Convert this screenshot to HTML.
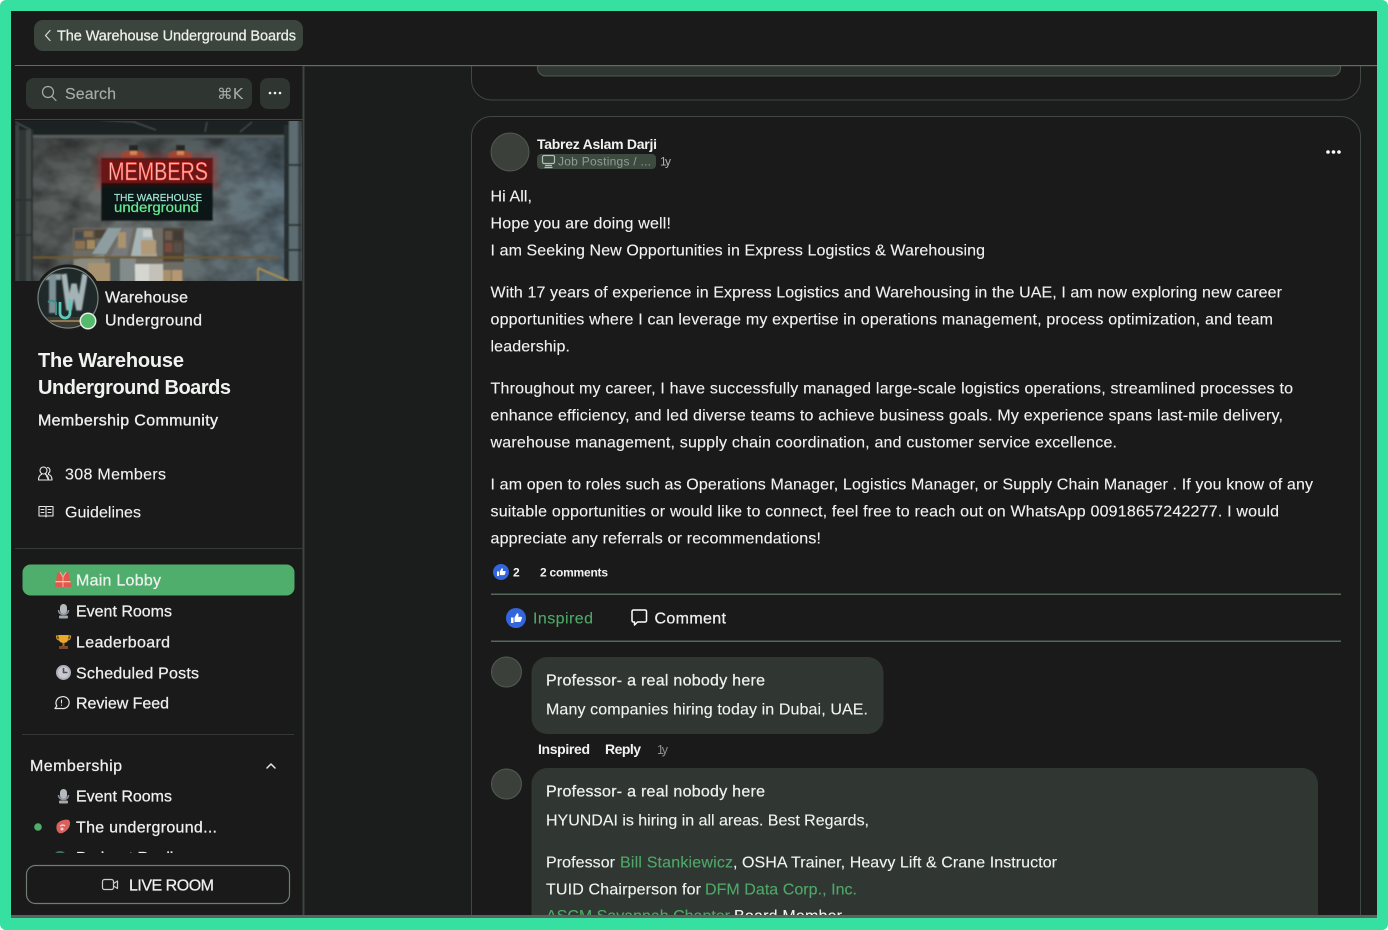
<!DOCTYPE html>
<html lang="en"><head><meta charset="utf-8"><title>The Warehouse Underground Boards</title>
<style>
html,body{margin:0;padding:0;background:#fff;width:1388px;height:930px;overflow:hidden}
svg{display:block}
text{font-family:"Liberation Sans",sans-serif;fill:#f1f3f1;font-size:16px;white-space:pre}
.b{font-size:16px;stroke:#f1f3f1;stroke-width:.12px}
.m{font-weight:700;font-size:15px;stroke:none}
.s{font-size:16px;fill:#eef0ee;stroke:#eef0ee;stroke-width:.25px}
.g{fill:#4fa868;stroke:#4fa868}
.ic{fill:none;stroke:#e6e9e6;stroke-width:1.4;stroke-linecap:round;stroke-linejoin:round}
</style></head><body>
<svg width="1388" height="930" viewBox="0 0 1388 930" xmlns="http://www.w3.org/2000/svg">
<defs>
<clipPath id="cMain"><rect x="305" y="66" width="1072" height="849"/></clipPath>
<clipPath id="cNav"><rect x="15" y="550" width="288" height="303"/></clipPath>
<clipPath id="cBan"><rect x="15" y="121" width="287" height="160"/></clipPath>
<clipPath id="cAv"><circle cx="68" cy="298" r="29"/></clipPath>
<linearGradient id="wall" x1="0" x2="1" y1="0" y2="0"><stop offset="0" stop-color="#535857"/><stop offset=".3" stop-color="#6a6f6d"/><stop offset=".55" stop-color="#6c7677"/><stop offset="1" stop-color="#607581"/></linearGradient>
<linearGradient id="wallv" x1="0" x2="0" y1="0" y2="1"><stop offset="0" stop-color="#000" stop-opacity=".35"/><stop offset=".4" stop-color="#000" stop-opacity="0"/><stop offset="1" stop-color="#000" stop-opacity=".08"/></linearGradient>
<filter id="soft" x="-5%" y="-5%" width="110%" height="110%"><feGaussianBlur stdDeviation=".9"/></filter>
<filter id="glow" x="-30%" y="-60%" width="160%" height="220%"><feGaussianBlur stdDeviation="3"/></filter>
<filter id="tex" x="0" y="0" width="100%" height="100%"><feTurbulence type="fractalNoise" baseFrequency=".035 .05" numOctaves="3" seed="7"/><feColorMatrix values="0 0 0 0 0  0 0 0 0 0  0 0 0 0 0  .9 0 0 0 -.32"/></filter>
</defs>

<!-- frame -->
<rect x="0" y="0" width="1388" height="930" rx="6" fill="#35e0a1"/>
<rect x="11" y="11" width="1366" height="907" fill="#1a1a1a"/>
<rect x="11" y="915" width="1366" height="3" fill="#5c615e"/>

<!-- main bg -->
<rect x="305" y="66" width="1072" height="849" fill="#1a1d1c"/>
<g clip-path="url(#cMain)">
  <rect x="471.500" y="20" width="889" height="80" rx="20" fill="#1a1a1a" stroke="#3f4841"/>
  <rect x="537.500" y="30" width="803" height="46" rx="8" fill="#303732" stroke="#4e5a51"/>
  <path d="M471.500 925V136.500a20 20 0 0 1 20-20h849a20 20 0 0 1 20 20V925z" fill="#1a1a1a" stroke="#3f4841"/>
  <circle cx="510" cy="152" r="19" fill="#3b413a" stroke="#525a53"/>
  <text x="537" y="149" class="m" style="font-size:14px" textLength="120">Tabrez Aslam Darji</text>
  <rect x="537" y="154" width="119" height="15" rx="4" fill="#3c4a40"/>
  <g fill="none" stroke="#b4bdb6" stroke-width="1.2" stroke-linejoin="round"><rect x="542.500" y="155.500" width="12" height="8" rx="1.500"/><path d="M545 165.500h7M544.500 167.500h8"/></g>
  <text x="558" y="165.500" style="font-size:12px;fill:#929c95" textLength="93">Job Postings / ...</text>
  <text x="660" y="165.500" style="font-size:12px;fill:#b0b5b1" textLength="11">1y</text>
  <g fill="#fff"><circle cx="1328" cy="152" r="1.800"/><circle cx="1333.500" cy="152" r="1.800"/><circle cx="1339" cy="152" r="1.800"/></g>

  <text x="490.500" y="201.500" class="b" textLength="41.500">Hi All,</text>
  <text x="490.500" y="228.500" class="b" textLength="180.500">Hope you are doing well!</text>
  <text x="490.500" y="255.500" class="b" textLength="494.500">I am Seeking New Opportunities in Express Logistics &amp; Warehousing</text>
  <text x="490.500" y="297.500" class="b" textLength="791.500">With 17 years of experience in Express Logistics and Warehousing in the UAE, I am now exploring new career</text>
  <text x="490.500" y="324.500" class="b" textLength="782.500">opportunities where I can leverage my expertise in operations management, process optimization, and team</text>
  <text x="490.500" y="351.500" class="b" textLength="79.500">leadership.</text>
  <text x="490.500" y="393.500" class="b" textLength="802.500">Throughout my career, I have successfully managed large-scale logistics operations, streamlined processes to</text>
  <text x="490.500" y="420.500" class="b" textLength="792.500">enhance efficiency, and led diverse teams to achieve business goals. My experience spans last-mile delivery,</text>
  <text x="490.500" y="447.500" class="b" textLength="626.500">warehouse management, supply chain coordination, and customer service excellence.</text>
  <text x="490.500" y="489.500" class="b" textLength="822.500">I am open to roles such as Operations Manager, Logistics Manager, or Supply Chain Manager . If you know of any</text>
  <text x="490.500" y="516.500" class="b" textLength="788.500">suitable opportunities or would like to connect, feel free to reach out on WhatsApp 00918657242277. I would</text>
  <text x="490.500" y="543.500" class="b" textLength="330.500">appreciate any referrals or recommendations!</text>

  <circle cx="501" cy="572" r="8" fill="#3366dd"/>
  <path d="M497 571.500h2v4.500h-2zM499.800 571.500l2-3.300c.9 0 1.300.6 1.100 1.500l-.3 1.300h2.200c.7 0 1 .6.800 1.200l-.8 2.300c-.1.400-.5.600-.9.600h-4.100z" fill="#fff"/>
  <text x="513" y="576.500" style="font-size:12px;font-weight:700" textLength="8">2</text>
  <text x="540" y="576.500" style="font-size:12px;font-weight:700" textLength="68">2 comments</text>
  <rect x="491" y="593.500" width="850" height="1.500" fill="#55675a"/>
  <rect x="491" y="640.500" width="850" height="1.500" fill="#55675a"/>
  <circle cx="516" cy="618" r="10" fill="#3366dd"/>
  <path d="M511 617.500h2.500v5.500H511zM514.500 617.500l2.500-4.300c1.200 0 1.700.8 1.500 1.900l-.4 1.700h2.800c.9 0 1.300.8 1 1.500l-1 3c-.2.500-.6.700-1.100.7h-5.300z" fill="#fff"/>
  <text x="533" y="623.500" class="b g" textLength="60">Inspired</text>
  <path d="M632 611.500a1.500 1.500 0 0 1 1.500-1.500h11.500a1.500 1.500 0 0 1 1.500 1.500v9a1.500 1.500 0 0 1-1.500 1.500h-7.500l-3 3v-3h-1a1.500 1.500 0 0 1-1.500-1.500z" class="ic" style="stroke:#fff;stroke-width:1.500"/>
  <text x="654.500" y="623.500" class="s" textLength="71.500">Comment</text>

  <circle cx="506.500" cy="672" r="15" fill="#3b413a" stroke="#525a53"/>
  <rect x="531.500" y="657" width="352" height="77" rx="16" fill="#303732"/>
  <text x="546" y="685.500" class="s" textLength="219">Professor- a real nobody here</text>
  <text x="546" y="714.500" class="b" textLength="322">Many companies hiring today in Dubai, UAE.</text>
  <text x="538" y="754" class="m" style="font-size:14px" textLength="52">Inspired</text>
  <text x="605" y="754" class="m" style="font-size:14px" textLength="36">Reply</text>
  <text x="657" y="754" style="font-size:12.500px;fill:#8d918e" textLength="11">1y</text>

  <circle cx="506.500" cy="784" r="15" fill="#3b413a" stroke="#525a53"/>
  <path d="M531.500 925V784a16 16 0 0 1 16-16h754.500a16 16 0 0 1 16 16V925z" fill="#303732"/>
  <text x="546" y="796.500" class="s" textLength="219">Professor- a real nobody here</text>
  <text x="546" y="825.500" class="b" textLength="323">HYUNDAI is hiring in all areas. Best Regards,</text>
  <text x="546" y="867.500" class="b" textLength="69">Professor</text>
  <text x="620" y="867.500" class="b g" textLength="113">Bill Stankiewicz</text>
  <text x="733" y="867.500" class="b" textLength="324">, OSHA Trainer, Heavy Lift &amp; Crane Instructor</text>
  <text x="546" y="894.500" class="b" textLength="155">TUID Chairperson for</text>
  <text x="705" y="894.500" class="b g" textLength="152">DFM Data Corp., Inc.</text>
  <text x="546" y="921" class="b g" textLength="184">ASCM Savannah Chapter</text>
  <text x="734" y="921" class="b" textLength="108">Board Member</text>
</g>

<!-- top bar -->
<rect x="15" y="11" width="1362" height="54" fill="#1a1a1a"/>
<rect x="15" y="65" width="1362" height="1.200" fill="#5f6e62"/>
<rect x="34" y="20" width="269" height="31" rx="9" fill="#3b443d"/>
<path d="M50 30.500l-4.500 5 4.500 5" fill="none" stroke="#d8dcd8" stroke-width="1.200" stroke-linecap="round" stroke-linejoin="round"/>
<text x="57" y="40.500" class="s" style="font-size:14.500px" textLength="239">The Warehouse Underground Boards</text>

<!-- sidebar -->
<rect x="15" y="66" width="288" height="849" fill="#1a1a1a"/>
<rect x="302.500" y="66" width="2" height="849" fill="#3c453f"/>
<rect x="26" y="78" width="226" height="31" rx="8" fill="#2f3632"/>
<circle cx="48" cy="92" r="5.500" fill="none" stroke="#a7aca8" stroke-width="1.200"/><path d="M52 96.500l4 4" stroke="#a7aca8" stroke-width="1.200" stroke-linecap="round"/>
<text x="65" y="99" style="fill:#a7aca8;stroke:#a7aca8;stroke-width:.15px" textLength="51">Search</text>
<text x="217" y="99" style="fill:#a7aca8;font-family:'DejaVu Sans','Liberation Sans',sans-serif;font-size:15px" textLength="26" lengthAdjust="spacingAndGlyphs">⌘K</text>
<rect x="260" y="78" width="30" height="31" rx="8" fill="#2f3632"/>
<g fill="#f0f0f0"><circle cx="270" cy="93" r="1.300"/><circle cx="275" cy="93" r="1.300"/><circle cx="280" cy="93" r="1.300"/></g>
<rect x="15" y="119" width="288" height="1" fill="#3f4943"/>

<!-- banner -->
<g clip-path="url(#cBan)">
 <g filter="url(#soft)">
  <rect x="15" y="120" width="288" height="162" fill="url(#wall)"/>
  <rect x="15" y="120" width="288" height="162" filter="url(#tex)"/>
  <rect x="15" y="120" width="288" height="162" fill="url(#wallv)"/>
  <rect x="15" y="120" width="288" height="15" fill="#1c2022"/>
  <rect x="30" y="135" width="254" height="3" fill="#545b5c"/>
  <path d="M15 122l16 8M100 120l35 2M240 132l12-10M205 132l2-10M134 122l22 8" stroke="#4c5356" stroke-width="1"/>
  <rect x="15" y="125" width="4" height="157" fill="#3a4040"/>
  <rect x="19" y="130" width="7" height="152" fill="#2f3535"/>
  <rect x="26" y="130" width="5" height="152" fill="#424847"/>
  <rect x="31" y="130" width="2" height="152" fill="#2b3030"/>
  <rect x="284" y="125" width="5" height="157" fill="#272e31"/>
  <rect x="289" y="120" width="13" height="162" fill="#5d6c71"/>
  <rect x="298" y="120" width="4" height="162" fill="#3a4548"/>
  <path d="M15 200h18M15 235h18M285 165h17M285 225h17M285 250h17" stroke="#2c3232" stroke-width="2"/>
  <!-- lamps -->
  <ellipse cx="133" cy="156" rx="12" ry="6" fill="#b3492c" opacity=".7"/>
  <ellipse cx="180" cy="156" rx="12" ry="6" fill="#b3492c" opacity=".7"/>
  <rect x="129" y="145" width="9" height="6" fill="#262626"/><rect x="176" y="145" width="9" height="6" fill="#262626"/>
  <rect x="130" y="151" width="7" height="4" fill="#d89560"/><rect x="177" y="151" width="7" height="4" fill="#d89560"/>
  <!-- opening -->
  <rect x="73" y="228" width="111" height="54" fill="#6d6c65"/>
  <path d="M74 229h33v21H74z" fill="#5d5347"/>
  <rect x="75" y="232" width="8" height="7" fill="#3d4a52"/><rect x="84" y="231" width="9" height="6" fill="#8a7150"/><rect x="95" y="230" width="10" height="8" fill="#4a4236"/>
  <rect x="75" y="241" width="10" height="8" fill="#8c7350"/><rect x="87" y="240" width="8" height="9" fill="#a08a60"/><rect x="96" y="239" width="10" height="6" fill="#6a6a60"/>
  <path d="M108 228h14l-16 26H92z" fill="#8d9da0"/>
  <path d="M123 228h10l-6 28h-16z" fill="#77797a"/>
  <rect x="118" y="232" width="8" height="16" fill="#a89270"/>
  <path d="M137 228h14l6 28h-26z" fill="#a7b4b6"/>
  <rect x="143" y="230" width="9" height="7" fill="#c8cbc6"/>
  <rect x="141" y="240" width="15" height="15" fill="#b09a78"/>
  <rect x="163" y="228" width="21" height="34" fill="#4f4338"/>
  <rect x="165" y="231" width="7" height="9" fill="#6b5d4d"/><rect x="174" y="231" width="8" height="9" fill="#3f3a36"/>
  <rect x="165" y="243" width="7" height="9" fill="#7a4a3e"/><rect x="174" y="243" width="8" height="9" fill="#57504a"/>
  <path d="M74 260l30-6 4 28H74z" fill="#8a8a7e"/>
  <rect x="88" y="263" width="22" height="19" fill="#a8926f"/>
  <rect x="110" y="258" width="10" height="24" fill="#56615d"/>
  <path d="M120 258h16l-2 24h-14z" fill="#848b8b"/>
  <rect x="135" y="264" width="14" height="18" fill="#d6d6d0"/>
  <rect x="149" y="264" width="14" height="18" fill="#c4c2b8"/>
  <rect x="163" y="270" width="8" height="12" fill="#a9906c"/>
  <rect x="172" y="270" width="10" height="12" fill="#b59873"/>
  <!-- rail -->
  <rect x="33" y="256.500" width="246" height="2" fill="#6f5a24"/>
  <path d="M258 268l30 13" stroke="#a78f4a" stroke-width="2"/><path d="M258 268v13" stroke="#a78f4a" stroke-width="1.500"/>
  <!-- sign -->
  <rect x="97" y="154" width="120" height="36" fill="#c0241c" opacity=".35" filter="url(#glow)"/>
  <rect x="101" y="158" width="112" height="63" fill="#0a1212"/>
  <rect x="101" y="159" width="112" height="26" fill="#6a1512"/>
  <rect x="101" y="183" width="112" height="3" fill="#2c0c0a"/>
 </g>
 <text x="108" y="180" style="font-size:25px;fill:#ffb4ad;stroke:#f23a30;stroke-width:.6px" textLength="100" lengthAdjust="spacingAndGlyphs">MEMBERS</text>
 <text x="114" y="201" style="font-size:10.500px;fill:#a3e6d6;stroke:#a3e6d6;stroke-width:.2px" textLength="88" lengthAdjust="spacingAndGlyphs">THE WAREHOUSE</text>
 <text x="114" y="212" style="font-size:14px;fill:#62ea92;stroke:#62ea92;stroke-width:.25px" textLength="85" lengthAdjust="spacingAndGlyphs">underground</text>
</g>

<!-- avatar -->
<circle cx="68" cy="298" r="33.500" fill="#1a1c1c"/>
<circle cx="68" cy="298" r="30" fill="#20292a" stroke="#7d8580" stroke-width="1.200"/>
<g clip-path="url(#cAv)">
 <rect x="38" y="317" width="60" height="14" fill="#3c3a30"/>
 <rect x="42" y="320" width="50" height="2" fill="#8f7a58"/>
 <g filter="url(#soft)">
 <rect x="44" y="274" width="17" height="6" fill="#8fa1a5"/>
 <rect x="49" y="274" width="7" height="39" fill="#7d9095"/>
 <path d="M64 274l5 36 5-26 5 26 6-36" fill="none" stroke="#a3b3b6" stroke-width="5.500"/>
 </g>
 <path d="M60 302v11a5 5 0 0 0 10 0v-14" fill="none" stroke="#5cc9bc" stroke-width="2.800"/>
 <path d="M48 302q5-3 8 1v12" fill="none" stroke="#3f8f89" stroke-width="2"/>
</g>
<circle cx="88" cy="321" r="8.500" fill="#e6efe8"/><circle cx="88" cy="321" r="7" fill="#54bb6d"/>
<text x="105" y="302.500" class="s" textLength="83">Warehouse</text>
<text x="105" y="325.500" class="s" textLength="97">Underground</text>

<text x="38" y="367" style="font-size:20px;font-weight:700" textLength="146">The Warehouse</text>
<text x="38" y="394" style="font-size:20px;font-weight:700" textLength="193">Underground Boards</text>
<text x="38" y="425.500" class="s" style="stroke-width:.35px" textLength="180">Membership Community</text>

<g class="ic" style="stroke-width:1.100"><circle cx="43.500" cy="470.500" r="3.500"/><path d="M38.500 480c0-3.300 1.500-5 3-5.500v-1M45.500 473.500v1c1.500.5 3 2.200 3 5.500zM38.500 480h10M47.500 467.500c2.500.3 3.500 3.800 1 5.700v1.300c2 .5 3.500 2.500 3.500 5.500h-3"/></g>
<text x="65" y="479.500" class="b" textLength="101">308 Members</text>
<g class="ic" style="stroke-width:1.100"><path d="M39 506.500h6c.6 0 1 .4 1 1v9.500c0-.6-.4-1-1-1h-6zM53 506.500h-6c-.6 0-1 .4-1 1v9.500c0-.6.4-1 1-1h6z"/><path d="M41 509.500h3M41 512.500h3M48 509.500h3M48 512.500h3"/></g>
<text x="65" y="517.500" class="b" textLength="76">Guidelines</text>
<rect x="15" y="548" width="288" height="1" fill="#343a36"/>

<!-- nav -->
<rect x="22.500" y="564.500" width="272" height="31" rx="8" fill="#4fae6c"/>
<g clip-path="url(#cNav)">
 <path d="M57.500 572.500l3-.5 2.500 5 2.500-5 3 .5 3 14.500H55z" fill="#e4574f"/><path d="M60 572l3 5v10M66 572l-3 5" stroke="#f1b89c" stroke-width="1" fill="none"/><rect x="55.500" y="581" width="15" height="1.300" fill="#f0d0a0"/>
 <text x="76" y="585.500" class="s" textLength="85">Main Lobby</text>
 <rect x="60" y="604" width="7" height="10" rx="3.500" fill="#b5b8bd"/><path d="M58.500 610c0 6 10 6 10 0" fill="none" stroke="#8f939a" stroke-width="1.500"/><rect x="59" y="615.500" width="9" height="3" rx="1" fill="#a4a7ac"/>
 <text x="76" y="616.500" class="s" textLength="96">Event Rooms</text>
 <path d="M58.500 635h10v3c0 3-1.800 5-5 5s-5-2-5-5z" fill="#e7a62e"/><path d="M58.500 636h-2c0 3 1 4 3 4M68.500 636h2c0 3-1 4-3 4" fill="none" stroke="#d2952a" stroke-width="1.200"/><rect x="62.500" y="643" width="2" height="3" fill="#a4722a"/><rect x="59" y="646" width="9" height="3" fill="#7a4b2c"/>
 <text x="76" y="647.500" class="s" textLength="94">Leaderboard</text>
 <circle cx="63.500" cy="672.500" r="7.500" fill="#aeb1b7"/><circle cx="63.500" cy="672.500" r="5.500" fill="#c8cace"/><path d="M63.500 668v4.500h4" stroke="#4a4e55" stroke-width="1.600" fill="none"/>
 <text x="76" y="678.500" class="s" textLength="123">Scheduled Posts</text>
 <path d="M61 697a6 6 0 1 1 1 11.500h-7l1.800-2.500A6 6 0 0 1 61 697z" class="ic" style="stroke-width:1.200"/><path d="M61.500 700v3M61.500 705v.3" class="ic" style="stroke-width:1.100"/>
 <text x="76" y="708.500" class="s" textLength="93">Review Feed</text>
 <rect x="22" y="734" width="272" height="1" fill="#333835"/>
 <text x="30" y="771" class="s" textLength="92">Membership</text>
 <path d="M267 768l4-4 4 4" fill="none" stroke="#e6e9e6" stroke-width="1.500" stroke-linecap="round" stroke-linejoin="round"/>
 <rect x="60" y="789" width="7" height="10" rx="3.500" fill="#b5b8bd"/><path d="M58.500 795c0 6 10 6 10 0" fill="none" stroke="#8f939a" stroke-width="1.500"/><rect x="59" y="800.500" width="9" height="3" rx="1" fill="#a4a7ac"/>
 <text x="76" y="801.500" class="s" textLength="96">Event Rooms</text>
 <circle cx="38" cy="827" r="3.800" fill="#4fae6c"/>
 <path d="M57 824c3-4 9-5 12-4 2 3 1 7-2 10-3 3-6 4-8 3-3-2-3-6-2-9z" fill="#d9605c"/><path d="M60 826c2-1 4-1 5 0" stroke="#f3d4cc" stroke-width="1.500" fill="none"/><circle cx="62" cy="829" r="1.500" fill="#f3d4cc"/>
 <text x="76" y="832.500" class="s" textLength="141">The underground...</text>
 <circle cx="60" cy="858" r="7" fill="#3f6f68"/>
 <text x="76" y="863" class="s" textLength="114">Podcast Replies</text>
</g>
<rect x="15" y="853" width="287" height="62" fill="#1a1a1a"/>
<rect x="26.500" y="865.500" width="263" height="38" rx="9" fill="#1a1a1a" stroke="#6f7d73" stroke-width="1.200"/>
<g class="ic" style="stroke-width:1.200;stroke:#c9cec9"><rect x="102.500" y="879.500" width="11" height="10" rx="2"/><path d="M113.500 883.500l4-2.500v7.500l-4-2.500"/></g>
<text x="129" y="890.500" class="s" textLength="85">LIVE ROOM</text>
</svg>
</body></html>
